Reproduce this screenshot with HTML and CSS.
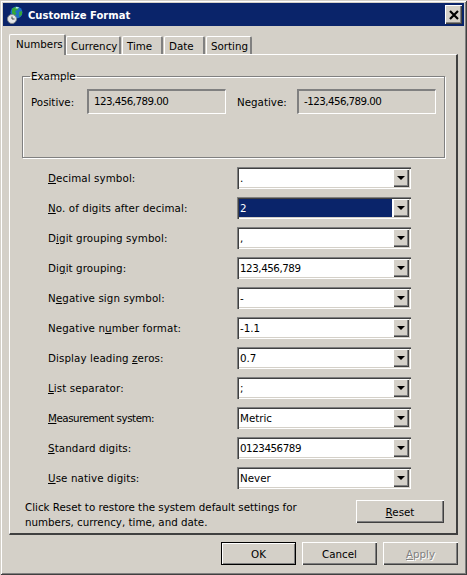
FILE: index.html
```html
<!DOCTYPE html>
<html lang="en">
<head>
  <meta charset="UTF-8">
  <title>Customize Format</title>
  <link rel="stylesheet" href="styles.css">
</head>
<body>
  <div class="window">
    <div class="titlebar">
      <svg class="app-icon" width="16" height="18" viewBox="0 0 16 18">
        <circle cx="9.5" cy="6.5" r="6" fill="#1f6fc4"/>
        <path d="M5 2.5 L9 0.8 L12 1.5 L10.5 4 L8 5 L9.5 8 L7 9.5 L5 7z" fill="#35a83a"/>
        <path d="M12 6 L15 5 L15 8.5 L12.5 11z" fill="#35a83a"/>
        <path d="M9 1 L12 1.2 L11 2.6 L8.5 2.6z" fill="#bfe6f5"/>
        <circle cx="5" cy="13" r="4.5" fill="#e4e6e8" stroke="#80868a" stroke-width="1"/>
        <path d="M5 10.5 V13 H7.5" fill="none" stroke="#404448" stroke-width="1"/>
      </svg>
      <span class="title">Customize Format</span>
      <button class="close">
        <svg width="10" height="10" viewBox="0 0 10 10"><path d="M1 1 L9 9 M9 1 L1 9" stroke="#000" stroke-width="2.2"/></svg>
      </button>
    </div>

    <div class="tabs">
      <div class="tab tab-active">Numbers</div>
      <div class="tab tab-currency">Currency</div>
      <div class="tab tab-time">Time</div>
      <div class="tab tab-date">Date</div>
      <div class="tab tab-sorting">Sorting</div>
    </div>

    <div class="panel">
      <fieldset class="example">
        <legend>Example</legend>
        <div class="example-row">
          <span class="example-label">Positive:</span>
          <div class="readout">123,456,789.00</div>
          <span class="example-label negative-label">Negative:</span>
          <div class="readout">-123,456,789.00</div>
        </div>
      </fieldset>

      <div class="form">
        <label><u>D</u>ecimal symbol:</label>
        <div class="combo"><span class="value">.</span><span class="arrow"></span></div>
        <label><u>N</u>o. of digits after decimal:</label>
        <div class="combo combo-focus"><span class="value">2</span><span class="arrow"></span></div>
        <label>D<u>i</u>git grouping symbol:</label>
        <div class="combo"><span class="value">,</span><span class="arrow"></span></div>
        <label>Di<u>g</u>it grouping:</label>
        <div class="combo"><span class="value num">123,456,789</span><span class="arrow"></span></div>
        <label>N<u>e</u>gative sign symbol:</label>
        <div class="combo"><span class="value">-</span><span class="arrow"></span></div>
        <label>Negative n<u>u</u>mber format:</label>
        <div class="combo"><span class="value">-1.1</span><span class="arrow"></span></div>
        <label>Display leading <u>z</u>eros:</label>
        <div class="combo"><span class="value">0.7</span><span class="arrow"></span></div>
        <label><u>L</u>ist separator:</label>
        <div class="combo"><span class="value">;</span><span class="arrow"></span></div>
        <label class="tight"><u>M</u>easurement system:</label>
        <div class="combo"><span class="value">Metric</span><span class="arrow"></span></div>
        <label><u>S</u>tandard digits:</label>
        <div class="combo"><span class="value num">0123456789</span><span class="arrow"></span></div>
        <label><u>U</u>se native digits:</label>
        <div class="combo"><span class="value">Never</span><span class="arrow"></span></div>
      </div>

      <div class="reset-row">
        <p>Click Reset to restore the system default settings for<br>numbers, currency, time, and date.</p>
        <button class="btn btn-reset"><u>R</u>eset</button>
      </div>
    </div>

    <div class="actions">
      <button class="btn btn-default">OK</button>
      <button class="btn">Cancel</button>
      <button class="btn btn-disabled"><u>A</u>pply</button>
    </div>
  </div>
</body>
</html>
```

FILE: styles.css
```css
body {
  margin: 0;
  font-family: "DejaVu Sans", sans-serif;
  font-size: 10.3px;
  color: #000;
  background: #d4d0c8;
}
.window {
  width: 467px;
  height: 575px;
  box-sizing: border-box;
  padding: 3px;
  background: #d4d0c8;
  box-shadow: inset 1px 1px 0 #d4d0c8, inset -1px -1px 0 #404040, inset 2px 2px 0 #fff, inset -2px -2px 0 #808080;
  overflow: hidden;
}
.titlebar {
  height: 23px;
  display: flex;
  align-items: center;
  padding: 0 2px 0 4px;
  background: #0a246a;
  color: #fff;
}
.app-icon {
  margin-right: 5px;
}
.title {
  flex: 1;
  padding-top: 2px;
  font-weight: bold;
  font-size: 10px;
}
.close {
  width: 17px;
  height: 19px;
  padding: 0;
  display: flex;
  align-items: center;
  justify-content: center;
  background: #d4d0c8;
  border: none;
  box-shadow: inset 1px 1px 0 #fff, inset -1px -1px 0 #404040, inset -2px -2px 0 #808080;
}
.tabs {
  display: flex;
  height: 20px;
  margin: 8px 0 0 6px;
  align-items: flex-end;
}
.tab {
  height: 18px;
  line-height: 19px;
  box-sizing: border-box;
  padding-left: 4px;
  border-top: 1px solid #fff;
  border-left: 1px solid #fff;
  border-right: 2px solid #808080;
  border-radius: 2px 2px 0 0;
  margin-right: 1px;
}
.tab-active {
  position: relative;
  width: 57px;
  height: 21px;
  line-height: 19px;
  padding-left: 6px;
  margin-bottom: -1px;
  margin-right: 0;
  background: #d4d0c8;
  z-index: 1;
}
.tab-currency { width: 55px; }
.tab-time { width: 41px; }
.tab-date { width: 41px; }
.tab-sorting { width: 46px; }
.panel {
  width: 449px;
  height: 481px;
  box-sizing: border-box;
  margin-left: 6px;
  padding: 15px 11px 0 12px;
  border-top: 1px solid #fff;
  border-left: 1px solid #fff;
  border-right: 2px solid #404040;
  border-bottom: 2px solid #404040;
}
.example {
  height: 88px;
  box-sizing: border-box;
  margin: 0;
  padding: 0 8px;
  border: 1px solid #808080;
  box-shadow: 1px 1px 0 #fff, inset 1px 1px 0 #fff;
}
.example legend {
  padding: 0 1px;
  margin-left: -1px;
}
.example-row {
  display: flex;
  align-items: center;
  margin-top: 7px;
}
.example-label {
  width: 56px;
}
.negative-label {
  width: 60px;
  margin-left: 11px;
}
.readout {
  width: 139px;
  height: 25px;
  line-height: 21px;
  box-sizing: border-box;
  padding-left: 5px;
  letter-spacing: -0.55px;
  border-top: 2px solid #808080;
  border-left: 2px solid #808080;
  border-right: 1px solid #fff;
  border-bottom: 1px solid #fff;
}
.form {
  display: grid;
  grid-template-columns: 189px 174px;
  grid-auto-rows: 22px;
  row-gap: 8px;
  align-items: center;
  margin: 9px 0 0 26px;
}
.form label {
  padding-bottom: 1px;
  letter-spacing: 0.1px;
}
.form label.tight {
  letter-spacing: -0.45px;
}
.combo {
  display: flex;
  height: 22px;
  box-sizing: border-box;
  padding: 2px;
  background: #fff;
  box-shadow: inset 1px 1px 0 #808080, inset 2px 2px 0 #404040, inset -1px -1px 0 #fff, inset -2px -2px 0 #d4d0c8;
}
.value {
  flex: 1;
  line-height: 18px;
  padding-left: 1px;
}
.value.num {
  letter-spacing: -0.45px;
}
.combo-focus .value {
  margin-right: 1px;
  background: #0a246a;
  color: #fff;
}
.arrow {
  position: relative;
  width: 16px;
  background: #d4d0c8;
  box-shadow: inset 1px 1px 0 #fff, inset -1px -1px 0 #404040, inset -2px -2px 0 #808080;
}
.arrow::after {
  content: "";
  position: absolute;
  left: 4px;
  top: 7px;
  border-top: 4px solid #000;
  border-left: 4px solid transparent;
  border-right: 4px solid transparent;
}
.reset-row {
  display: flex;
  justify-content: space-between;
  margin-top: 11px;
}
.reset-row p {
  margin: 0 0 0 3px;
  line-height: 15px;
}
.btn {
  width: 75px;
  height: 23px;
  padding: 0;
  font: inherit;
  color: #000;
  background: #d4d0c8;
  border: none;
  box-shadow: inset 1px 1px 0 #fff, inset -1px -1px 0 #404040, inset -2px -2px 0 #808080;
}
.btn-reset {
  width: 88px;
  margin-right: 1px;
}
.actions {
  display: flex;
  justify-content: flex-end;
  gap: 6px;
  margin: 7px 6px 0 0;
}
.btn-default {
  outline: 1px solid #000;
  outline-offset: -1px;
  box-shadow: inset 2px 2px 0 #fff, inset -2px -2px 0 #808080;
}
.btn-disabled {
  color: #808080;
  text-shadow: 1px 1px 0 #fff;
}
```
